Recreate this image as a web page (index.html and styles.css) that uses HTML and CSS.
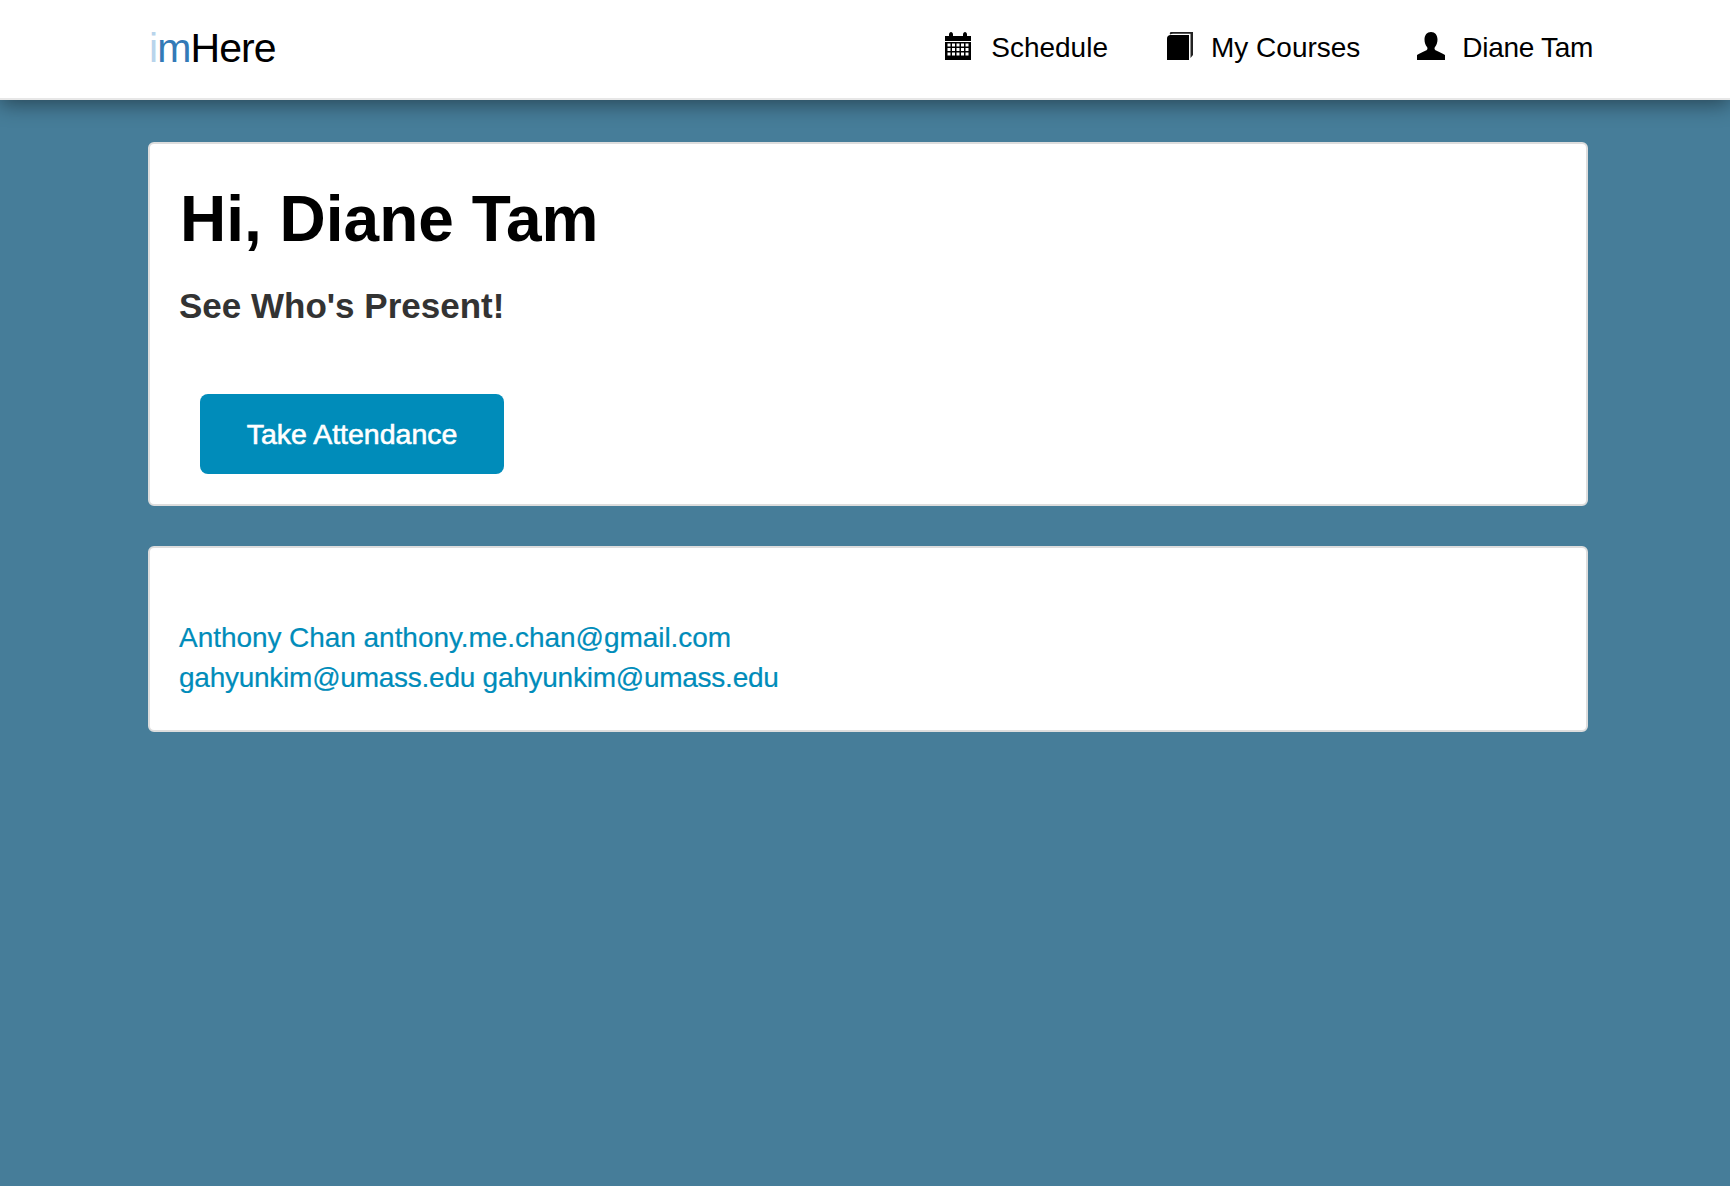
FILE: index.html
```html
<!DOCTYPE html>
<html>
<head>
  <title>imHere</title>
  <link rel="stylesheet" href="styles.css">
</head>
<body>
  <nav class="navbar">
    <a class="brand" href="#"><span class="brand-i">i</span><span class="brand-m">m</span>Here</a>
    <div class="nav-links">
      <a class="nav-link" href="#">
        <svg class="nav-icon" viewBox="0 0 26 28" width="26" height="28">
          <path fill-rule="evenodd" d="M0 4h4V2.500C4 1 5 0 6 0s2 1 2 2.500V4h10V2.500C18 1 19 0 20 0s2 1 2 2.500V4h4v24H0zM0 9v1h26V9zM2.500 11.500v3h3v-3zM7 11.500v3h3v-3zM11.500 11.500v3h3v-3zM16 11.500v3h3v-3zM20.500 11.500v3h3v-3zM2.500 16v3h3v-3zM7 16v3h3v-3zM11.500 16v3h3v-3zM16 16v3h3v-3zM20.500 16v3h3v-3zM2.500 20.500v3h3v-3zM7 20.500v3h3v-3zM11.500 20.500v3h3v-3zM16 20.500v3h3v-3zM20.500 20.500v3h3v-3z"/>
        </svg>
        Schedule
      </a>
      <a class="nav-link nav-courses" href="#">
        <svg class="nav-icon" viewBox="0 0 26 28" width="26" height="28">
          <path d="M4 0h22v23l-2.500 3V1.800H6C5 1.800 4 2 3 2.500 2.500 1 3 0 4 0z" fill="#222"/>
          <path d="M0 28V6.500C0 4.500 1.500 3 3.500 3H22v25z"/>
        </svg>
        My Courses
      </a>
      <a class="nav-link nav-user" href="#">
        <svg class="nav-icon" viewBox="0 0 28 28" width="28" height="28">
          <path d="M14 0c4 0 6.500 3 6.500 7.500 0 3-1 5.500-2.500 7.500-.7 1-.7 2.500.5 3.200 2.500 1.300 7 3 9.500 4.800V28H0v-5c2.500-1.800 7-3.500 9.500-4.800 1.200-.7 1.200-2.200.5-3.200-1.500-2-2.500-4.500-2.500-7.500C7.500 3 10 0 14 0z"/>
        </svg>
        Diane Tam
      </a>
    </div>
  </nav>

  <div class="container">
    <div class="card">
      <h1>Hi, Diane Tam</h1>
      <h3>See Who's Present!</h3>
      <button class="btn">Take Attendance</button>
    </div>

    <div class="card student-list">
      <a class="student" href="#">Anthony Chan anthony.me.chan@gmail.com</a>
      <a class="student" href="#">gahyunkim@umass.edu gahyunkim@umass.edu</a>
    </div>
  </div>
</body>
</html>
```

FILE: styles.css
```css
/* page */
html, body {
  height: 100%;
}

body {
  margin: 0;
  background-color: #467d99;
  font-family: "Liberation Sans", Arial, sans-serif;
  color: #000;
}

/* top bar */
.navbar {
  display: flex;
  justify-content: space-between;
  align-items: center;
  height: 100px;
  box-sizing: border-box;
  padding: 0 137px 2px 149px;
  background-color: #fff;
  border-bottom: 2px solid #e7e7e7;
  box-shadow: 0 4px 20px rgba(0, 0, 0, 0.45);
}

.brand {
  font-size: 41px;
  letter-spacing: -0.9px;
  color: #000;
  text-decoration: none;
}

.brand-i {
  color: #b8d4ec;
}

.brand-m {
  color: #337ab7;
}

.nav-links {
  display: flex;
  gap: 57px;
}

.nav-link {
  display: flex;
  align-items: center;
  gap: 20px;
  font-size: 28px;
  color: #000;
  text-decoration: none;
}

.nav-icon {
  margin-bottom: 4px;
}

.nav-courses {
  gap: 18px;
  margin-left: 2px;
}

.nav-user {
  gap: 17px;
  letter-spacing: -0.3px;
}

/* cards */
.container {
  width: 1440px;
  margin-left: 148px;
  padding-top: 42px;
}

.card {
  background-color: #fff;
  border: 2px solid #ddd;
  border-radius: 6px;
  padding: 30px 29px;
  margin-bottom: 40px;
}

h1 {
  margin: 11px 0 0 1px;
  font-size: 64px;
  line-height: 68px;
}

h3 {
  margin: 33px 0 0;
  font-size: 35px;
  line-height: 40px;
  color: #333;
}

.btn {
  display: block;
  width: 304px;
  height: 80px;
  margin: 68px 0 0 21px;
  border: 0;
  border-radius: 8px;
  background-color: #008cba;
  color: #fff;
  font-family: inherit;
  font-size: 28.5px;
  -webkit-text-stroke: 0.6px #fff;
}

.student-list {
  padding-top: 70px;
  padding-bottom: 32px;
}

.student {
  display: block;
  font-size: 28px;
  letter-spacing: -0.05px;
  line-height: 40px;
  color: #008cba;
  text-decoration: none;
  -webkit-text-stroke: 0.2px #008cba;
}

.student + .student {
  letter-spacing: -0.25px;
}
```
